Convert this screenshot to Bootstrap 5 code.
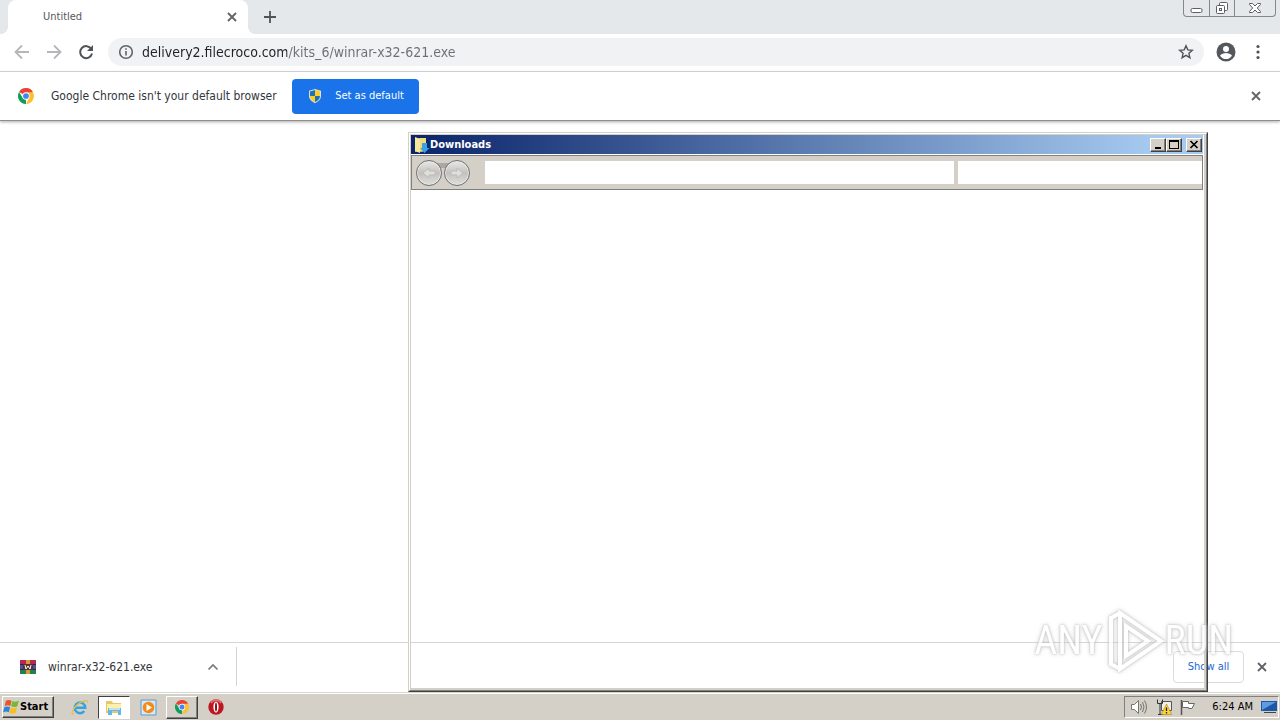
<!DOCTYPE html>
<html lang="en">
<head>
<meta charset="utf-8">
<meta name="viewport" content="width=device-width, initial-scale=1">
<title>Untitled</title>
<link href="https://cdn.jsdelivr.net/npm/bootstrap@5.3.0/dist/css/bootstrap.min.css" rel="stylesheet">
<style>
  body { font-family: "DejaVu Sans Condensed", "DejaVu Sans", sans-serif; font-size: 12px; line-height: 16px; color: #333639; }
  button { font: inherit; color: inherit; background: none; border: 0; padding: 0; }
  svg { display: block; flex: none; }
  .desktop { min-height: 100vh; background: #fff; }

  /* browser */
  .tabstrip { height: 34px; background: #e4e8eb; }
  .tab-active { width: 240px; background: #fff; border-radius: 8px 8px 0 0; margin-left: 8px; padding: 0 10px 0 35px; font-size: 11px; color: #55585c; position: relative; }
  .tab-active::before, .tab-active::after { content: ""; position: absolute; bottom: 0; width: 8px; height: 8px; }
  .tab-active::before { left: -8px; background: radial-gradient(circle at 0 0, #e4e8eb 8px, #fff 8px); }
  .tab-active::after { right: -8px; background: radial-gradient(circle at 100% 0, #e4e8eb 8px, #fff 8px); }
  .caption { height: 17px; margin-right: 4px; border: 1px solid #85888b; border-top: 0; border-radius: 0 0 4px 4px; }
  .caption button { width: 25px; display: grid; place-items: center; }
  .caption button + button { border-left: 1px solid #85888b; }
  .caption button:last-child { width: 41px; }
  .toolbar { height: 38px; border-bottom: 1px solid #d9dbde; padding: 0 16px 2px 14px; }
  .omnibox { height: 28px; border-radius: 14px; background: #f0f2f4; padding: 0 10px; margin: 0 12px 0 14px; }
  .address { border: 0; outline: 0; padding: 0; height: 20px; font-family: inherit; font-size: 14px; color: #202124;
    background: linear-gradient(90deg, #202124 145px, #6b6f73 145px); -webkit-background-clip: text; background-clip: text; -webkit-text-fill-color: transparent; }
  .infobar { height: 49px; padding: 0 18px; border-bottom: 1px solid #8d8d8d; box-shadow: 0 1px 3px #0005; }
  .infobar-text { width: 229px; margin: 0 12px 0 17px; }
  .set-default { height: 35px; width: 127px; border-radius: 4px; background: #1a73e8; color: #fff; font-size: 11px; }
  .shelf { height: 51px; border-top: 1px solid #d5d5d5; border-bottom: 1px solid #d5d5d0; padding: 0 12px 2px 20px; }
  .shelf-item { height: 39px; width: 217px; border-right: 1px solid #d5d5d5; padding-right: 17px; }
  .show-all { width: 71px; height: 32px; border: 1px solid #dadce0; border-radius: 4px; color: #1967d2; font-size: 11px; }

  /* folder window: its body is still unpainted, so the browser shows through */
  .folder { position: absolute; left: 408px; top: 132px; width: 800px; height: 560px; border: 1px solid; border-color: #d4d0c8 #404040 #404040 #d4d0c8; }
  .folder-edge { border: 1px solid; border-color: #fff #808080 #808080 #fff; }
  .folder-frame { border: solid #d4d0c8; border-width: 1px 2px 2px 1px; padding: 0 1px 0 0; }
  .titlebar { height: 19px; background: linear-gradient(90deg, #0a246a, #a6caf0 94%); color: #fff; font-size: 11px; font-weight: 700; padding: 0 1px 0 2px; margin-bottom: 1px; }
  .classic { background: #d4d0c8; border: 1px solid; border-color: #fff #404040 #404040 #fff; box-shadow: inset -1px -1px #808080; display: grid; place-items: center; }
  .titlebar .classic { width: 16px; height: 14px; }
  .navband { height: 35px; background: #d4d0c8; border: 1px solid #808080; padding: 0 0 0 4px; }
  .field { flex: 23 1 0; height: 23px; border: 0; border-radius: 0; background: #fff; padding: 0; min-width: 0; outline: 0; }
  .field[type=search] { flex-grow: 12; }
  .orbs { gap: 2px; margin-right: 15px; background: linear-gradient(#0000 3px, #aaa8a4 3px 8px, #0000 8px) center / 28px 100% no-repeat; }
  .orb { width: 26px; height: 26px; border-radius: 50%; border: 1px solid #707070; background: linear-gradient(#e8e8e6, #c2c1be 50%, #dededc); box-shadow: inset 0 0 0 1px #e9e9e6; display: grid; place-items: center; }

  /* taskbar */
  .taskbar { height: 27px; background: #d4d0c8; border-top: 1px solid #fff; padding: 1px 1px 1px 2px; color: #000; }
  .start { width: 52px; height: 22px; font-size: 11px; font-weight: 700; }
  .start.classic { display: flex; align-items: center; }
  .task { width: 32px; height: 23px; display: grid; place-items: center; }
  .task.pressed { background: #fff; border: 1px solid; border-color: #404040 #fff #fff #404040; }
  .quick { margin-left: 10px; gap: 2px; }
  .tray { height: 22px; border: 1px solid; border-color: #808080 #fff #fff #808080; padding: 0 1px 0 5px; font-size: 11px; }
  .watermark { position: absolute; right: 47px; bottom: 48px; color: #fff; opacity: .75; font: 400 40px/62px "Roboto Condensed", Roboto, "Liberation Sans", sans-serif; filter: drop-shadow(0 0 1px #aaa) drop-shadow(0 0 2px #ccc); pointer-events: none; }
</style>
</head>
<body>
<svg class="d-none" aria-hidden="true">
  <symbol id="chrome" viewBox="0 0 24 24">
    <path fill="#ea4335" d="M12 12 1.6 6A12 12 0 0 1 22.4 6z"/>
    <path fill="#0f9d58" d="M1.6 6l5.7 9.2 4.7 2.3L12 24A12 12 0 0 1 1.6 6z"/>
    <path fill="#fbc02d" d="M12 6.5h10.6A12 12 0 0 1 12 24l4.8-9z"/>
    <circle cx="12" cy="12" r="5.5" fill="#fff"/><circle cx="12" cy="12" r="4.3" fill="#4285f4"/>
  </symbol>
  <symbol id="cross" viewBox="0 0 12 12"><path d="m2 2 8 8m0-8-8 8" stroke="#5f6368" stroke-width="1.8"/></symbol>
</svg>

<div class="desktop d-flex flex-column position-relative overflow-hidden">
  <header>
    <div class="tabstrip d-flex align-items-start">
      <div class="tab-active d-flex align-items-center justify-content-between h-100">
        <span>Untitled</span>
        <button type="button" aria-label="Close tab"><svg width="12" height="12"><use href="#cross"/></svg></button>
      </div>
      <button type="button" class="align-self-center ms-3" aria-label="New tab"><svg width="12" height="12" viewBox="0 0 12 12"><path d="M6 0v12M0 6h12" stroke="#505458" stroke-width="1.8"/></svg></button>
      <div class="caption d-flex ms-auto">
        <button type="button" aria-label="Minimize"><svg width="13" height="14" viewBox="0 0 13 14"><rect x="1" y="7.500" width="11" height="4" rx="1.500" fill="#fff" stroke="#5b5e63"/></svg></button>
        <button type="button" aria-label="Restore"><svg width="14" height="14" viewBox="0 0 14 14" fill="#fff" stroke="#5b5e63"><rect x="4.500" y="1.500" width="8" height="8" rx="1"/><rect x="1.500" y="4.500" width="8" height="8" rx="1"/><rect x="4.500" y="7.500" width="2" height="2"/></svg></button>
        <button type="button" aria-label="Close"><svg width="14" height="14" viewBox="0 0 14 14"><path d="M1.500 2.500h3L7 5l2.500-2.500h3v1L9.300 7l3.200 3.500v1h-3L7 9l-2.500 2.500h-3v-1L4.700 7 1.500 3.500z" fill="#fff" stroke="#5b5e63"/></svg></button>
      </div>
    </div>
    <div class="toolbar d-flex align-items-center">
      <div class="d-flex gap-3">
        <button type="button" aria-label="Back"><svg width="16" height="16" viewBox="0 0 16 16" fill="none" stroke="#b4b6b9" stroke-width="1.800"><path d="M15 8H2M8 1.500 1.500 8 8 14.500"/></svg></button>
        <button type="button" aria-label="Forward"><svg width="16" height="16" viewBox="0 0 16 16" fill="none" stroke="#b4b6b9" stroke-width="1.800"><path d="M1 8h13M8 1.500 14.500 8 8 14.500"/></svg></button>
        <button type="button" aria-label="Reload"><svg width="16" height="16" viewBox="0 0 16 16"><path d="M13.300 5A6 6 0 1 0 14 9.500" fill="none" stroke="#505458" stroke-width="2"/><path d="M15 1v6H9z" fill="#505458"/></svg></button>
      </div>
      <div class="omnibox d-flex align-items-center flex-grow-1">
        <svg width="16" height="16" viewBox="0 0 16 16" fill="none" stroke="#5f6368" stroke-width="1.600"><circle cx="8" cy="8" r="6.300"/><path d="M8 7v4.500M8 4.200v1.600"/></svg>
        <input class="address flex-grow-1 ms-2" type="text" aria-label="Address" value="delivery2.filecroco.com/kits_6/winrar-x32-621.exe">
        <button type="button" aria-label="Bookmark this tab"><svg width="16" height="16" viewBox="0 0 16 16"><path d="m8 1.800 1.800 4.100 4.500.4-3.400 3 1 4.400L8 11.400l-3.900 2.300 1-4.400-3.400-3 4.500-.4z" fill="none" stroke="#505458" stroke-width="1.400"/></svg></button>
      </div>
      <button type="button" aria-label="Profile"><svg width="20" height="20" viewBox="0 0 20 20"><circle cx="10" cy="10" r="9.500" fill="#54575b"/><circle cx="10" cy="7" r="3" fill="#fff"/><path d="M4 13.800c1-2 4-2.800 6-2.800s5 .8 6 2.800a7.200 7.200 0 0 1-12 0z" fill="#fff"/></svg></button>
      <button type="button" class="ms-3" aria-label="Menu"><svg width="12" height="16" viewBox="0 0 12 16" fill="#505458"><circle cx="6" cy="2.500" r="1.600"/><circle cx="6" cy="8" r="1.600"/><circle cx="6" cy="13.500" r="1.600"/></svg></button>
    </div>
    <div class="infobar d-flex align-items-center">
      <svg width="16" height="16"><use href="#chrome"/></svg>
      <span class="infobar-text text-nowrap">Google Chrome isn't your default browser</span>
      <button type="button" class="set-default d-flex align-items-center justify-content-center gap-2">
        <svg width="16" height="16" viewBox="0 0 16 16"><path d="M8 1 2 2.800V8c0 3.500 2.500 5.500 6 7.200 3.500-1.700 6-3.700 6-7.200V2.800z" fill="#ddd"/><path d="M8 2v6h5V3.400zM8 8H3c0 3 2 4.700 5 6.100z" fill="#ffcf1b"/><path d="M8 2v6H3V3.400zM8 8h5c0 3-2 4.700-5 6.100z" fill="#1f72b8"/></svg>
        <span class="ms-1">Set as default</span>
      </button>
      <button type="button" class="ms-auto" aria-label="Dismiss"><svg width="12" height="12"><use href="#cross"/></svg></button>
    </div>
  </header>

  <main class="flex-grow-1"></main>

  <section class="shelf d-flex align-items-center" aria-label="Downloads bar">
    <div class="shelf-item d-flex align-items-center">
      <svg width="16" height="16" viewBox="0 0 16 16"><path fill="#b32952" d="M0 1h16v5H0z"/><path fill="#4f4ba7" d="M0 6h16v4H0z"/><path fill="#22804a" d="M0 10h16v5H0z"/><path fill="#2b2540" d="M0 5h16v1H0zm0 5h16v1H0z"/><path fill="#d79a35" d="M6 1h4v14H6z"/><path fill="#543331" d="M3 5h10v6H3z"/><path d="m5 6 1 4 2-3 2 3 1-4" fill="none" stroke="#fff"/></svg>
      <span class="ms-2 ps-1">winrar-x32-621.exe</span>
      <button type="button" class="ms-auto" aria-label="Item options"><svg width="12" height="12" viewBox="0 0 12 12"><path d="m1.500 8.500 4.500-4.500 4.500 4.500" fill="none" stroke="#777a7e" stroke-width="1.700"/></svg></button>
    </div>
    <button type="button" class="show-all ms-auto me-2">Show all</button>
    <button type="button" class="ms-1" aria-label="Close downloads bar"><svg width="12" height="12"><use href="#cross"/></svg></button>
  </section>

  <footer class="taskbar d-flex align-items-center">
    <button type="button" class="start classic"><svg width="17" height="18" viewBox="0 0 18 18"><path fill="#e8552b" d="M3 2.500c2.200-1.500 4-1 6-.2L7.700 8C5.500 7 4 7 1.800 8.100z"/><path fill="#79b92f" d="M9.900 2.700c2.200 1.200 4 1 6.900-.5l-1.600 6C13 9.500 11 9.300 8.500 8.300z"/><path fill="#2d83d4" d="M1.500 9.200c2.200-1.200 4-1 6-.1L6.200 14.600C4 13.500 2.500 13.500 0 14.800z"/><path fill="#f8bd23" d="M8.300 9.600c2.300 1 4.200 1 6.500 0l-1.500 5.700c-2.500 1.300-4.300 1-6.500-.2z"/></svg><span>Start</span></button>
    <div class="quick d-flex">
      <button type="button" class="task" aria-label="Internet Explorer"><svg width="18" height="18" viewBox="0 0 18 18"><path d="M4 9.800h10.300A5.300 5.300 0 1 0 13.300 13" fill="none" stroke="#35a3df" stroke-width="2.400"/><path d="M3 15.500C-.5 17 1 12 5.500 7.500S17.500.5 16.500 5" fill="none" stroke="#e9bd45" stroke-width="1.300"/></svg></button>
      <button type="button" class="task pressed" aria-label="Explorer"><svg width="18" height="18" viewBox="0 0 18 18"><path fill="#e7c768" d="M1 3h6l1 2h8v10H1z"/><path fill="#fff0a9" d="M2 6h14v7H2z"/><path fill="#68b7e2" d="M3 10h13v7h-3v-4H7v4H3z"/><path fill="#b9e4f6" d="M4 10h11v2H4z"/></svg></button>
      <button type="button" class="task" aria-label="Media Player"><svg width="17" height="17" viewBox="0 0 17 17"><path d="M1 1h15v15H1z" fill="#d4e7f7" stroke="#5b9bd0"/><circle cx="8.500" cy="8.500" r="5.800" fill="#f58a14"/><path fill="#fff" d="m6.500 5 5.500 3.500L6.500 12z"/></svg></button>
      <button type="button" class="task classic" aria-label="Chrome"><svg width="14" height="14"><use href="#chrome"/></svg></button>
      <button type="button" class="task" aria-label="Opera"><svg width="16" height="16" viewBox="0 0 16 16"><circle cx="8" cy="8" r="7.700" fill="#bd1620"/><path d="M3 4a6 6 0 0 1 10 0" stroke="#e87878" stroke-width="1.500" fill="none"/><ellipse cx="8" cy="8" rx="2.600" ry="5.500" fill="#fff"/><ellipse cx="8" cy="8" rx="1" ry="4.600" fill="#8a1018"/></svg></button>
    </div>
    <div class="tray d-flex align-items-center ms-auto">
      <svg width="18" height="16" viewBox="0 0 18 16" fill="none" stroke="#77756f"><path fill="#fff" d="M1.500 5.500h3l4-4v13l-4-4h-3z"/><path d="M10.500 5q2 3 0 6M12.500 3q3 5 0 10M14.500 1.500q4 6.500 0 13"/></svg>
      <svg class="ms-2" width="16" height="16" viewBox="0 0 16 16"><path d="M5.500 2.500h10v9h-10z" fill="#eee" stroke="#555"/><path d="M1.500.5v4h5v-4M4 4.500v11M2 15.500h5" fill="none" stroke="#333"/><path d="m10.500 5 5.200 10.500H5.300z" fill="#ffd52e" stroke="#a78312" stroke-width=".6"/><path d="M10.500 8.500v3.500m0 1v1.500" stroke="#222" stroke-width="1.300"/></svg>
      <svg class="ms-2" width="16" height="16" viewBox="0 0 16 16"><path d="M1.500 1v15" stroke="#555" stroke-width="1.500"/><path d="M2.500 2.500h6v2h6l-2.500 5H8.500v-1h-6z" fill="#fff" stroke="#666"/></svg>
      <time class="ms-3 me-2">6:24 AM</time>
      <svg width="16" height="16" viewBox="0 0 16 16"><path d="M0 2h16v10H0z" fill="#1d57a8"/><path d="M1 3h14L1 11z" fill="#5d9ce0"/><path d="M3 13h12v1H3z" fill="#444"/></svg>
    </div>
  </footer>

  <section class="folder" aria-label="Downloads">
    <div class="folder-edge h-100">
    <div class="folder-frame h-100">
      <div class="bg-white pt-0 pb-0">
      <div class="titlebar d-flex align-items-center">
        <svg width="17" height="16" viewBox="0 0 17 16"><path fill="#c9a84c" d="M2 1h8v14H2z"/><path fill="#f7e79d" d="m2 0 5 2v14l-5-2z"/><path fill="#f1d97c" d="M7 1h6v13H7z"/><path fill="#39a0e4" d="M9 6h5v5h2.500l-5 5-4.500-5h2z"/></svg>
        <span>Downloads</span>
        <div class="d-flex ms-auto">
          <button type="button" class="classic" aria-label="Minimize"><svg width="10" height="10" viewBox="0 0 10 10"><path d="M2 7h6v2H2z"/></svg></button>
          <button type="button" class="classic" aria-label="Maximize"><svg width="10" height="10" viewBox="0 0 10 10"><path d="M0 0h10v9H0zm1 2v6h8V2z" fill-rule="evenodd"/></svg></button>
          <button type="button" class="classic ms-1" aria-label="Close"><svg width="10" height="10" viewBox="0 0 10 10"><path d="m1.500 1 7 7m0-7-7 7" stroke="#000" stroke-width="1.700"/></svg></button>
        </div>
      </div>
      <div class="navband d-flex align-items-center">
        <div class="orbs d-flex">
          <button type="button" class="orb" aria-label="Back"><svg width="14" height="14" viewBox="0 0 14 14"><path d="M1 7l6-5v3h6v4H7v3z" fill="#dededb" stroke="#bcbbb8"/></svg></button>
          <button type="button" class="orb" aria-label="Forward"><svg width="14" height="14" viewBox="0 0 14 14"><path d="M13 7 7 2v3H1v4h6v3z" fill="#dededb" stroke="#bcbbb8"/></svg></button>
        </div>
        <input class="field" type="text" aria-label="Location">
        <input class="field ms-1" type="search" aria-label="Search Downloads">
      </div>
      </div>
    </div>
    </div>
  </section>

  <div class="watermark d-flex align-items-center" aria-label="ANY RUN">
    <span>ANY</span>
    <svg width="62" height="62" viewBox="0 0 62 62" fill="none" stroke="#fff" stroke-width="4"><path d="M17 3 58 31 17 59z"/><path d="M17 3 8 8v46l9 5M23 16v30l22-15z"/></svg>
    <span>RUN</span>
  </div>
</div>
<script src="https://cdn.jsdelivr.net/npm/bootstrap@5.3.0/dist/js/bootstrap.bundle.min.js"></script>
</body>
</html>
